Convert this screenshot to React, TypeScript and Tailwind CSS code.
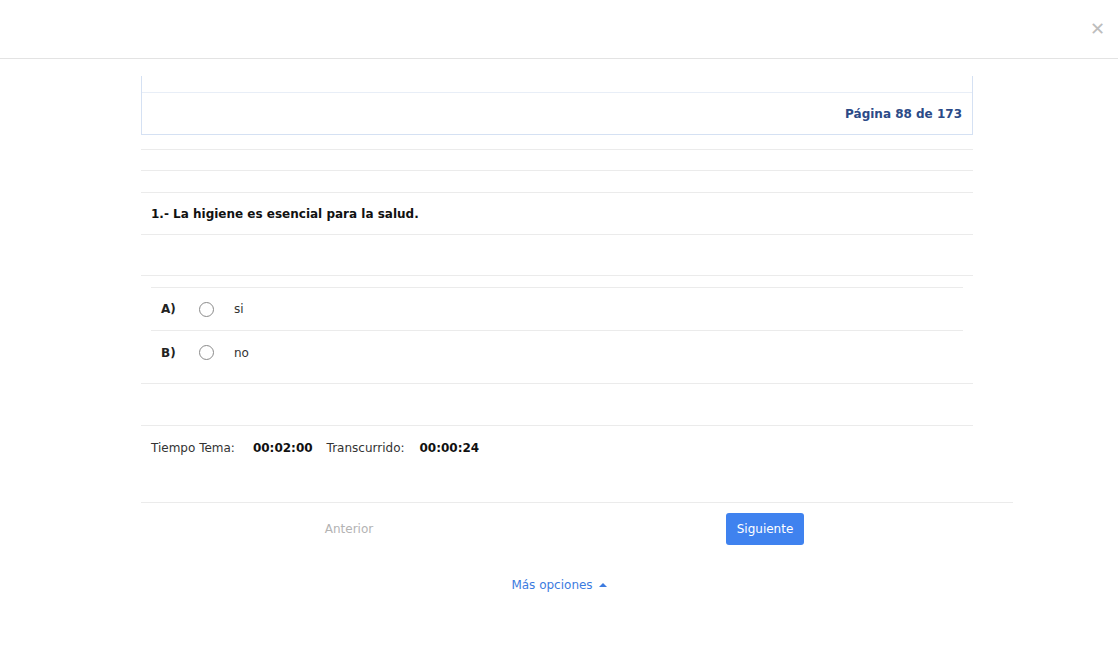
const font = { fontFamily: '"DejaVu Sans", Verdana, sans-serif' };

function Option({ letter, text, last }: { letter: string; text: string; last?: boolean }) {
  return (
    <div className={`flex items-center h-[43px] pl-[10px] ${last ? "" : "border-b border-[#ebebeb]"}`}>
      <span className="w-[38px] text-[12px] font-bold text-[#222]">{letter}</span>
      <span className="w-[15px] h-[15px] rounded-full border border-[#8a8a8a] bg-white" />
      <span className="ml-[20px] text-[12px] text-[#333]">{text}</span>
    </div>
  );
}

export default function App() {
  return (
    <div className="w-[1118px] h-[660px] bg-white text-[#222]" style={font}>
      {/* cabecera */}
      <div className="h-[59px] border-b border-[#e3e3e3] flex items-center justify-end pr-[13px]">
        <span className="text-[#bdbdbd] text-[18px] leading-none">✕</span>
      </div>

      <div className="ml-[141px] w-[832px]">
        {/* panel de página */}
        <div className="mt-[17px] border-x border-b border-[#d5e1f3]">
          <div className="h-[17px] border-b border-[#e8eef7]" />
          <div className="h-[41px] flex items-center justify-end pr-[10px]">
            <span className="text-[12px] font-bold text-[#2b4a87]">Página 88 de 173</span>
          </div>
        </div>

        <div className="h-[15px] border-b border-[#ebebeb]" />
        <div className="h-[21px] border-b border-[#ebebeb]" />
        <div className="h-[22px] border-b border-[#ebebeb]" />

        <div className="h-[42px] flex items-center pl-[10px] border-b border-[#ebebeb]">
          <span className="text-[12px] font-bold text-[#111]">1.- La higiene es esencial para la salud.</span>
        </div>
        <div className="h-[41px] border-b border-[#ebebeb]" />

        <div className="pt-[11px] h-[108px] border-b border-[#ebebeb]">
          <div className="mx-[10px] border-t border-[#ebebeb]">
            <Option letter="A)" text="si" />
            <Option letter="B)" text="no" last />
          </div>
        </div>
        <div className="h-[42px] border-b border-[#ebebeb]" />

        <div className="h-[44px] flex items-center pl-[10px] text-[12px]">
          <span className="text-[#333]">Tiempo Tema:</span>
          <span className="ml-[18px] font-bold text-[#111]">00:02:00</span>
          <span className="ml-[14px] text-[#333]">Transcurrido:</span>
          <span className="ml-[15px] font-bold text-[#111]">00:00:24</span>
        </div>
      </div>

      <div className="ml-[141px] w-[872px] mt-[32px] border-t border-[#ebebeb]" />

      <div className="ml-[141px] w-[832px] grid grid-cols-2 mt-[10px] h-[32px] items-center">
        <div className="flex justify-center">
          <span className="text-[12px] text-[#b3b3b3]">Anterior</span>
        </div>
        <div className="flex justify-center">
          <button className="h-[32px] px-[11px] rounded-[3px] bg-[#3f82ef] text-white text-[12px]">
            Siguiente
          </button>
        </div>
      </div>

      <div className="mt-[31px] flex justify-center items-center text-[#3c7be0] text-[12px]">
        <span>Más opciones</span>
        <span className="ml-[6px] w-0 h-0 border-x-[4px] border-x-transparent border-b-[4px] border-b-[#3c7be0]" />
      </div>
    </div>
  );
}
